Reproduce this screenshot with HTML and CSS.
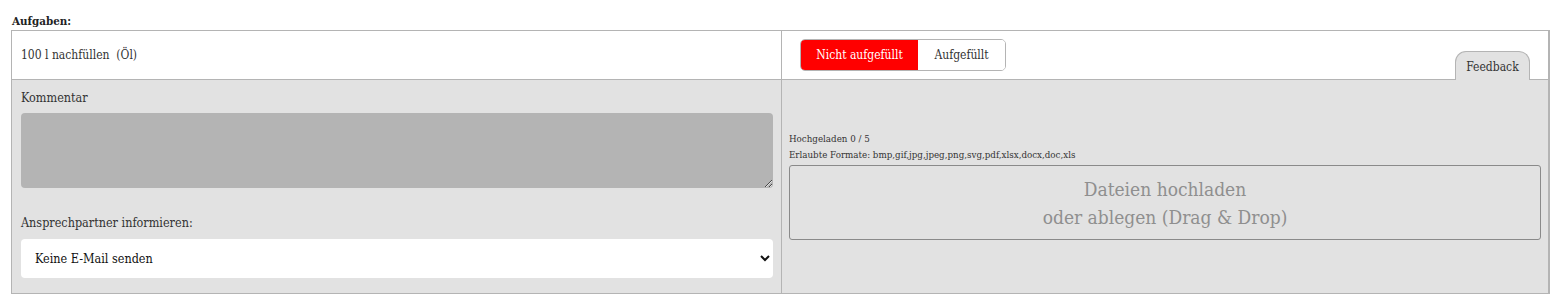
FILE: index.html
```html
<!DOCTYPE html>
<html lang="de">
<head>
<meta charset="utf-8">
<title>Aufgaben</title>
<link rel="stylesheet" href="styles.css">
</head>
<body>
<div class="page">
  <div class="title">Aufgaben:</div>
  <div class="table">
    <div class="cell task">100 l nachfüllen&nbsp; (Öl)</div>
    <div class="cell status">
      <div class="toggle">
        <button class="btn active" type="button">Nicht aufgefüllt</button>
        <button class="btn" type="button">Aufgefüllt</button>
      </div>
      <div class="feedback">Feedback</div>
    </div>
    <div class="cell detail-left">
      <label class="label">Kommentar</label>
      <textarea class="comment"></textarea>
      <label class="label label-contact">Ansprechpartner informieren:</label>
      <select class="select">
        <option>Keine E-Mail senden</option>
      </select>
    </div>
    <div class="cell detail-right">
      <div class="upload">
        <div class="small">Hochgeladen 0 / 5</div>
        <div class="small">Erlaubte Formate: bmp,gif,jpg,jpeg,png,svg,pdf,xlsx,docx,doc,xls</div>
        <div class="dropzone">Dateien hochladen<br>oder ablegen (Drag &amp; Drop)</div>
      </div>
    </div>
  </div>
</div>
</body>
</html>
```

FILE: styles.css
```css
* { box-sizing: border-box; }
html, body { margin: 0; padding: 0; background: #fff; }
body {
  font-family: "DejaVu Serif Condensed", "DejaVu Serif", serif;
  font-size: 12.5px;
  color: #333;
}
.page { padding: 12px 10px 0 11px; }
.title {
  font-weight: bold;
  font-size: 11.5px;
  color: #222;
  padding-left: 1px;
  height: 18px;
  line-height: 18px;
}
.table {
  display: grid;
  grid-template-columns: 770px 1fr;
  grid-template-rows: 49px 213px;
  border: 1px solid #b4b4b4;
  border-right: 2px solid #b4b4b4;
}
.cell { min-width: 0; }
.task {
  background: #fff;
  border-right: 1px solid #b4b4b4;
  border-bottom: 1px solid #b4b4b4;
  padding: 0 9px;
  display: flex;
  align-items: center;
  font-size: 12px;
}
.status {
  background: #fff;
  border-bottom: 1px solid #b4b4b4;
  display: flex;
  justify-content: space-between;
  padding: 0 18px 0 18px;
}
.toggle {
  align-self: flex-start;
  margin-top: 8px;
  display: flex;
  border: 1px solid #b4b4b4;
  border-radius: 5px;
  overflow: hidden;
  height: 32px;
}
.btn {
  font: inherit;
  font-size: 12px;
  border: 0;
  margin: 0;
  background: #fff;
  color: #333;
  padding: 0 14px;
  height: 30px;
  width: 87px;
}
.btn.active {
  background: #ff0000;
  color: #fff;
  width: 117px;
}
.feedback {
  align-self: flex-end;
  margin-bottom: -1px;
  width: 75px;
  height: 29px;
  background: #e2e2e2;
  border: 1px solid #b4b4b4;
  border-bottom: 0;
  border-radius: 11px 11px 0 0;
  display: flex;
  align-items: center;
  justify-content: center;
  padding-top: 2px;
  color: #333;
  font-size: 12px;
}
.detail-left {
  background: #e2e2e2;
  border-right: 1px solid #b4b4b4;
  padding: 10px 8px 0 9px;
  display: flex;
  flex-direction: column;
}
.label { display: block; line-height: 16px; }
.comment {
  display: block;
  margin-top: 7px;
  width: 752px;
  height: 75px;
  background: #b4b4b4;
  border: 0;
  border-radius: 4px;
  resize: vertical;
}
.label-contact { margin-top: 27px; }
.select {
  margin-top: 8px;
  width: 752px;
  height: 39px;
  border: 0;
  border-radius: 4px;
  background: #fff;
  font: inherit;
  font-size: 12.5px;
  color: #111;
  padding: 0 6px 0 10px;
}
.detail-right {
  background: #e2e2e2;
  display: flex;
  align-items: center;
  padding: 0 7px 0 7px;
}
.upload { width: 100%; margin-top: -2px; }
.small { font-size: 9.7px; line-height: 16px; color: #333; }
.dropzone {
  margin-top: 2px;
  height: 75px;
  border: 1px solid #8a8a8a;
  border-radius: 3px;
  display: flex;
  align-items: center;
  justify-content: center;
  text-align: center;
  font-size: 19px;
  line-height: 28px;
  color: #8f8f8f;
}
```
